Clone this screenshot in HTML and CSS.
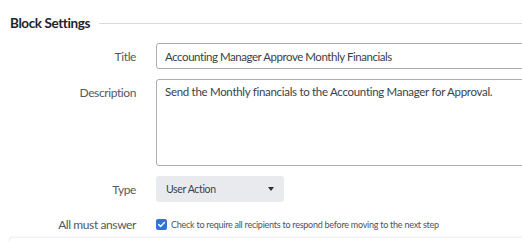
FILE: index.html
```html
<!DOCTYPE html>
<html lang="en">
<head>
    <meta charset="UTF-8">
    <meta name="viewport" content="width=device-width, initial-scale=1.0">
    <title>Block Settings</title>
    <link rel="stylesheet" href="styles.css">
</head>
<body>
    <div class="panel">
        <div class="section-head">
            <h2>Block Settings</h2>
            <span class="rule"></span>
        </div>
        <form class="settings">
            <label for="title" class="field-label">Title</label>
            <div class="field">
                <input type="text" id="title" class="text-input" value="Accounting Manager Approve Monthly Financials">
            </div>

            <label for="description" class="field-label label-top">Description</label>
            <div class="field">
                <textarea id="description" class="text-area">Send the Monthly financials to the Accounting Manager for Approval.</textarea>
            </div>

            <label for="type" class="field-label">Type</label>
            <div class="field">
                <div class="select" id="type">
                    <span>User Action</span>
                    <span class="caret"></span>
                </div>
            </div>

            <label class="field-label">All must answer</label>
            <div class="field check-row">
                <span class="checkbox">
                    <svg width="9" height="9" viewBox="0 0 9 9"><path d="M1.6 4.6 L3.6 6.5 L7.4 2.6" fill="none" stroke="#fff" stroke-width="1.4" stroke-linecap="round" stroke-linejoin="round"/></svg>
                </span>
                <span class="check-text">Check to require all recipients to respond before moving to the next step</span>
            </div>
        </form>
    </div>
    <div class="next-card"></div>
</body>
</html>
```
FILE: styles.css
```css
body {
    margin: 0;
    font-family: Lato, "Liberation Sans", sans-serif;
    background-color: #fff;
    overflow: hidden;
    color: #3b3f47;
}

.panel {
    padding-top: 11px;
}

.section-head {
    display: flex;
    align-items: center;
    padding-left: 10px;
    height: 24px;
}

.section-head h2 {
    margin: 0;
    font-size: 13.5px;
    font-weight: bold;
    letter-spacing: -0.4px;
    color: #1f232b;
}

.rule {
    flex: 1;
    height: 1px;
    margin-left: 9px;
    background-color: #d4dbf1;
}

.settings {
    display: grid;
    grid-template-columns: 136px 1fr;
    column-gap: 20px;
    row-gap: 10px;
    margin-top: 8px;
}

.field-label {
    text-align: right;
    font-size: 12px;
    letter-spacing: -0.4px;
    color: #55595f;
    align-self: center;
}

.label-top {
    align-self: start;
    padding-top: 6px;
}

.field {
    min-width: 0;
    overflow: hidden;
}

.text-input,
.text-area {
    display: block;
    width: 400px;
    box-sizing: border-box;
    border: 1px solid #acacac;
    border-radius: 3px;
    font-family: inherit;
    font-size: 11.5px;
    letter-spacing: -0.45px;
    color: #3b3f4a;
    padding: 0 8px;
    margin: 0;
    background: #fff;
}

.text-input {
    height: 26px;
}

.text-area {
    height: 87px;
    padding-top: 4px;
    resize: none;
    line-height: 16px;
    letter-spacing: -0.3px;
}

.select {
    display: flex;
    align-items: center;
    justify-content: space-between;
    width: 128px;
    height: 26px;
    box-sizing: border-box;
    padding: 0 10px 0 10px;
    background-color: #e8eaee;
    border-radius: 3px;
    font-size: 10.5px;
    letter-spacing: -0.35px;
    color: #3b3f4a;
}

.caret {
    width: 0;
    height: 0;
    border-left: 3px solid transparent;
    border-right: 3px solid transparent;
    border-top: 4px solid #2b2f36;
}

.check-row {
    display: flex;
    align-items: center;
    height: 24px;
}

.checkbox {
    display: flex;
    align-items: center;
    justify-content: center;
    width: 11px;
    height: 11px;
    border-radius: 2px;
    background-color: #2f74de;
    margin-right: 4px;
}

.check-text {
    font-size: 9px;
    letter-spacing: -0.25px;
    color: #4d525b;
    white-space: nowrap;
}

.next-card {
    margin: 1px 0 0 9px;
    height: 4px;
    background-color: #fff;
    border-top: 1px solid #f0f0f0;
    border-left: 1px solid #f0f0f0;
    border-radius: 3px 0 0 0;
    box-shadow: 0 0 3px rgba(0, 0, 0, 0.05);
}
```
